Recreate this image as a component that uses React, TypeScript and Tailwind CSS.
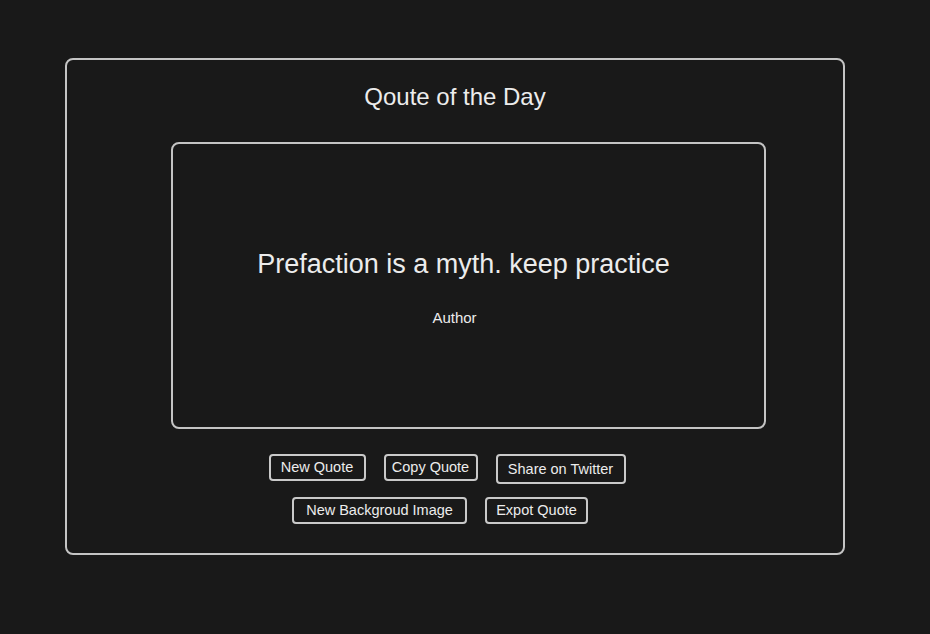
const btn =
  'h-[27px] whitespace-nowrap rounded-[4px] border-2 border-[#c9c9c9] px-[6px] text-[14.5px] leading-none text-[#ececec]'

function App() {
  return (
    <div
      className="min-h-[634px] w-full bg-[#191919] pt-[58px] pl-[65px]"
      style={{ fontFamily: '"Liberation Sans", Arial, sans-serif' }}
    >
      <div className="flex h-[497px] w-[780px] flex-col rounded-[8px] border-2 border-[#c4c4c4]">
        <h1 className="mt-[23px] text-center text-[24px] leading-[28px] text-[#ececec]">
          Qoute of the Day
        </h1>

        <div className="mt-[31px] ml-[104px] flex h-[287px] w-[595px] flex-col rounded-[8px] border-2 border-[#c4c4c4] pt-[104px]">
          <p className="pr-[10px] text-center text-[27px] leading-[32px] text-[#ececec]">
            Prefaction is a myth. keep practice
          </p>
          <p className="mt-[28px] pr-[28px] text-center text-[15px] leading-[20px] text-[#ececec]">
            Author
          </p>
        </div>

        <div className="mt-[25px] flex items-start justify-center gap-[18px] pr-[16px]">
          <button className={btn + ' w-[97px]'}>New Quote</button>
          <button className={btn + ' w-[94px]'}>Copy Quote</button>
          <button className={btn + ' h-[30px] w-[130px]'}>Share on Twitter</button>
        </div>

        <div className="mt-[13px] flex justify-center gap-[18px] pr-[30px]">
          <button className={btn + ' w-[175px]'}>New Backgroud Image</button>
          <button className={btn + ' w-[103px]'}>Expot Quote</button>
        </div>
      </div>
    </div>
  )
}

export default App
